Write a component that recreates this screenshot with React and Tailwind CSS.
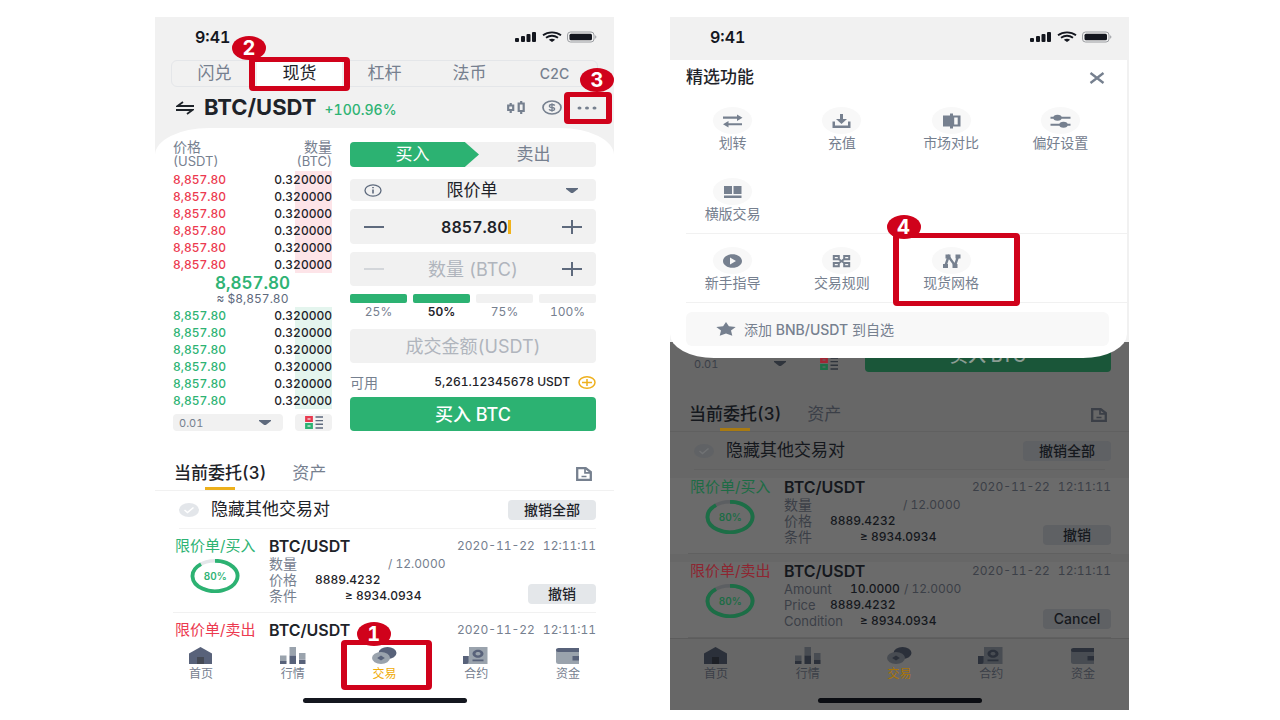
import React from "react";

const light = {
  strong: "text-[#1e2329]",
  muted: "text-[#76808f]",
  green: "text-[#2eb374]",
  red: "text-[#ec3a50]",
  amber: "text-[#f0ac0a]",
  underline: "bg-[#edb01c]",
  line: "border-[#f1f1f1]",
  field: "bg-[#f1f1f1]",
  action: "bg-[#e4e7ea]",
  buy: "bg-[#2cb272] text-white",
  tick: "bg-[#e3e6ea]",
  tickMark: "stroke-white",
  track: "stroke-[#e3e6e9]",
  arc: "stroke-[#2cb272]",
  order: "pt-[9px] bg-white",
  navDark: "fill-[#58627a]",
  navLight: "fill-[#9aa3ad]",
  bar: "bg-[#14171f]",
  listRed: "stroke-[#e8394f]",
  listGreen: "stroke-[#2cb272]",
  icon: "text-[#5e6a7d]",
};

const dim = {
  strong: "text-[#15181d]",
  muted: "text-[#3b3f47]",
  green: "text-[#1d6b45]",
  red: "text-[#8e2631]",
  amber: "text-[#a87408]",
  underline: "bg-[#a87a12]",
  line: "border-[#606060]",
  field: "bg-transparent",
  action: "bg-[#5f6164]",
  buy: "bg-[#1a5639] text-[#8b9c93]",
  tick: "bg-[#606265]",
  tickMark: "stroke-[#707274]",
  track: "stroke-[#5c5f62]",
  arc: "stroke-[#1c6e46]",
  order: "mt-2 pt-px bg-[#6b6b6b]",
  navDark: "fill-[#2b303a]",
  navLight: "fill-[#484c52]",
  bar: "bg-[#0b0d12]",
  listRed: "stroke-[#a02634]",
  listGreen: "stroke-[#1c6e46]",
  icon: "text-[#2f343c]",
};

function Marker({ n, box, badge }) {
  return (
    <span className={`pointer-events-none absolute z-20 ${box}`}>
      <span className="absolute inset-0 rounded-sm border-x-[6px] border-y-[5px] border-[#d0021b]" />
      <span
        className={`absolute flex h-6 w-[34px] items-center justify-center rounded-[50%] bg-[#d0021b] text-[20px] leading-6 font-bold text-white ${badge}`}
      >
        {n}
      </span>
    </span>
  );
}

function StatusBar() {
  return (
    <div className="flex h-[43px] items-center justify-between bg-[#f1f1f1] pr-[17px] pb-1 pl-10 text-[#14171f]">
      <span className="text-[16px] font-semibold">9:41</span>
      <svg width="82" height="12" viewBox="0 0 82 12" fill="currentColor" aria-hidden="true">
        <rect x="0" y="7" width="4" height="4" rx="1" />
        <rect x="6" y="5" width="4" height="6" rx="1" />
        <rect x="11.500" y="3" width="4" height="8" rx="1" />
        <rect x="17" y="1" width="4" height="10" rx="1" />
        <g fill="none" stroke="currentColor" strokeWidth="1.900">
          <path d="M28 4.200C33 .4 41 .4 46 4.200" />
          <path d="M31 6.800c3.600-2.500 8.400-2.500 12 0" />
        </g>
        <path d="M33.800 8.800c2-1.400 4.400-1.400 6.400 0L37 11z" />
        <rect x="52.500" y="1" width="26.500" height="10" rx="3" fill="none" stroke="#9b9ea2" />
        <rect x="54.500" y="2.700" width="22.500" height="6.600" rx="1.500" />
        <path d="M80.200 4.300c1.600.6 1.600 2.800 0 3.400z" fill="#9b9ea2" />
      </svg>
    </div>
  );
}

function Caret() {
  return (
    <svg width="12" height="7" viewBox="0 0 12 7" fill="currentColor" aria-hidden="true">
      <path d="M0 1h12v1L7.500 5.500Q6 6.500 4.500 5.500L0 2z" />
    </svg>
  );
}

function ListIcon({ c }) {
  return (
    <svg width="18" height="13" viewBox="0 0 18 13" fill="none" className={c.icon} aria-hidden="true">
      <rect x="1.300" y="1.200" width="5.400" height="3.600" strokeWidth="2.400" className={c.listRed} />
      <rect x="1.300" y="8.200" width="5.400" height="3.600" strokeWidth="2.400" className={c.listGreen} />
      <path d="M10.500 1h7.500M10.500 4.600h7.500M10.500 8.300h7.500M10.500 12h7.500" stroke="currentColor" strokeWidth="1.400" />
    </svg>
  );
}

function Depth({ c }) {
  return (
    <div className="flex h-[17px] items-center justify-between gap-3">
      <label className={`flex h-full flex-1 items-center rounded-sm pr-3 pl-1.5 ${c.field} ${c.icon}`}>
        <select aria-label="深度" className={`flex-1 appearance-none bg-transparent text-[11px] leading-4 outline-none ${c.muted}`}>
          <option>0.01</option>
        </select>
        <Caret />
      </label>
      <button aria-label="盘口样式" className={`flex h-full w-[37px] items-center justify-center rounded-sm ${c.field}`}>
        <ListIcon c={c} />
      </button>
    </div>
  );
}

function BuyButton({ c }) {
  return <button className={`flex h-[34px] w-full items-center justify-center rounded-sm text-[18px] font-medium ${c.buy}`}>买入 BTC</button>;
}

function OrderTabs({ c }) {
  return (
    <div className={`border-b pt-[26px] ${c.line}`}>
      <div className="flex h-[33px] items-stretch px-[19px]">
        <button className={`relative text-[17px] font-medium ${c.strong}`}>
          当前委托(3)
          <span className={`absolute bottom-0 left-1/2 h-[3px] w-[30px] -translate-x-1/2 ${c.underline}`} />
        </button>
        <button className={`ml-[26px] text-[17px] ${c.muted}`}>资产</button>
        <button aria-label="历史委托" className={`mr-[3px] ml-auto ${c.muted}`}>
          <svg width="16" height="14" viewBox="0 0 16 14" fill="none" stroke="currentColor" aria-hidden="true">
            <path d="M1.200 1h8.300L14.800 5v8H1.200z" strokeWidth="2.300" />
            <path d="M9 1v4.800h6" strokeWidth="1.700" />
            <path d="M5.500 9.500h5" strokeWidth="1.500" />
          </svg>
        </button>
      </div>
    </div>
  );
}

function HideOthers({ c }) {
  return (
    <div className="flex h-[37px] items-center pr-[18px] pl-6">
      <label className={`flex items-center gap-3 text-[17px] ${c.strong}`}>
        <span className="grid place-items-center">
          <input type="checkbox" defaultChecked className={`h-[14px] w-5 appearance-none rounded-[50%] [grid-area:1/1] ${c.tick}`} />
          <svg width="12" height="8" viewBox="0 0 12 8" fill="none" strokeWidth="1.500" className={`pointer-events-none [grid-area:1/1] ${c.tickMark}`} aria-hidden="true">
            <path d="M1.500 4l3 2.500L10.500 1.500" />
          </svg>
        </span>
        隐藏其他交易对
      </label>
      <button className={`ml-auto h-5 w-[88px] rounded-sm text-[14px] leading-5 font-medium ${c.action} ${c.strong}`}>撤销全部</button>
    </div>
  );
}

function Order({ c, side, sell, en, brief }) {
  const tone = sell ? c.red : c.green;
  const label = `font-normal ${c.muted} ${en ? "text-[13px]" : "text-[14px]"}`;
  return (
    <article className={c.order}>
      <div className={`mx-[18px] flex ${brief ? "" : `border-b pb-2 ${c.line}`}`}>
        <div className="flex w-[96px] flex-col items-start pl-0.5">
          <div className="flex flex-col items-center">
            <span className={`text-[15px] leading-4 whitespace-nowrap ${tone}`}>限价单/{side}</span>
            {!brief && (
              <div className="mt-[5px] grid place-items-center">
                <svg width="50" height="34" viewBox="0 0 50 34" fill="none" className="[grid-area:1/1]" aria-hidden="true">
                  <ellipse cx="25" cy="17" rx="22.500" ry="15.200" strokeWidth="3.600" className={c.track} />
                  <path d="M25 1.800A22.500 15.200 0 1 1 11 5.100" strokeWidth="3.800" className={c.arc} />
                </svg>
                <span className={`text-[10px] leading-3 font-semibold [grid-area:1/1] ${c.green}`}>80%</span>
              </div>
            )}
          </div>
        </div>
        <div className="flex-1">
          <div className="flex items-center justify-between leading-4">
            <span className={`text-[16px] leading-4 font-semibold ${c.strong}`}>BTC/USDT</span>
            <span className={`flex gap-2 text-[12px] leading-4 ${c.muted}`}>
              <span>2020-11-22</span>
              <span>12:11:11</span>
            </span>
          </div>
          {!brief && (
            <div className="mt-0.5 flex items-end justify-between">
              <dl className={`text-[12px] leading-4 font-medium ${c.strong}`}>
                <div className="flex">
                  <dt className={`${label} ${en ? "w-[66px]" : "w-[119px]"}`}>{en ? "Amount" : "数量"}</dt>
                  <dd>
                    {en && <span className="mr-1">10.0000</span>}
                    <span className={`font-normal ${c.muted}`}>/ 12.0000</span>
                  </dd>
                </div>
                <div className="flex">
                  <dt className={`w-[46px] ${label}`}>{en ? "Price" : "价格"}</dt>
                  <dd>8889.4232</dd>
                </div>
                <div className="flex">
                  <dt className={`w-[76px] ${label}`}>{en ? "Condition" : "条件"}</dt>
                  <dd>≥ 8934.0934</dd>
                </div>
              </dl>
              <button className={`h-5 w-[68px] rounded-sm text-[14px] leading-5 font-medium ${c.action} ${c.strong}`}>{en ? "Cancel" : "撤销"}</button>
            </div>
          )}
        </div>
      </div>
    </article>
  );
}

const navIcons = {
  home: (c) => (
    <>
      <path d="M1 6.500L12.500 0 24 6.500V17H1z" className={c.navDark} />
      <path d="M9 10h7v7H9z" className={c === dim ? "fill-[#1d2026]" : "fill-[#454a55]"} />
    </>
  ),
  market: (c) => (
    <>
      <path d="M0 8.500h6.500v6H0zM9.500 0H16v8.500H9.500zM19 6h6.500v6H19z" className={c.navLight} />
      <path d="M0 14h6.500v3H0zM9.500 8.500H16V17H9.500zM19 12.500h6.500V17H19z" className={c.navDark} />
    </>
  ),
  trade: (c) => (
    <>
      <ellipse cx="16.500" cy="6" rx="9" ry="6" className={c.navDark} />
      <ellipse cx="10" cy="11" rx="9" ry="6" className={c.navLight} />
      <path d="M10 8.400l3.800 2.600-3.800 2.600L6.200 11z" className={c.navDark} />
    </>
  ),
  futures: (c) => (
    <>
      <path d="M6 0h18.500v17H3V9h3z" className={c.navLight} />
      <path d="M0 9h5.500v5.500Q5.500 17 3 17H0z" className={c.navDark} />
      <path fillRule="evenodd" d="M15 2.800c3 0 5.500 1.800 5.500 4s-2.500 4-5.500 4-5.500-1.800-5.500-4 2.500-4 5.500-4zm0 2.300c-1.500 0-2.500.7-2.500 1.700s1 1.700 2.500 1.700 2.500-.7 2.500-1.700-1-1.700-2.500-1.700zM9.500 12.600h11v1.600h-11z" className={c.navDark} />
    </>
  ),
  wallet: (c) => (
    <>
      <path d="M1 2h23v15H3.500Q1 17 1 15z" className={c.navLight} />
      <path d="M3.500 1H24v4H3Q1 5 1 3T3.500 1zM17.500 9H24v4.500h-6.500z" className={c.navDark} />
    </>
  ),
};

const navItems = [
  ["home", "首页"],
  ["market", "行情"],
  ["trade", "交易"],
  ["futures", "合约"],
  ["wallet", "资金"],
];

function BottomNav({ c, marker }) {
  return (
    <nav className={c === dim ? "border-t border-[#5c5c5c]" : "border-t border-transparent"}>
      <div className="grid grid-cols-5">
        {navItems.map(([id, label]) => (
          <a key={id} href={`#${id}`} className={`relative flex h-[51px] flex-col items-center pt-2 text-[12px] leading-[18px] ${id === "trade" ? c.amber : c.muted}`}>
            <svg width="26" height="17" viewBox="0 0 26 17" className="mb-px" aria-hidden="true">
              {navIcons[id](c)}
            </svg>
            {label}
            {marker && id === "trade" && <Marker n="1" box="left-0.5 -right-0.5 top-px bottom-0" badge="left-4 -top-[18px]" />}
          </a>
        ))}
      </div>
      <div className="flex justify-center pt-2 pb-[7px]">
        <div className={`h-[5px] w-[164px] rounded-full ${c.bar}`} />
      </div>
    </nav>
  );
}

function Book({ tone, shade }) {
  return (
    <table className="w-full text-[12px] leading-[17px] font-medium">
      <tbody>
        {[0, 1, 2, 3, 4, 5].map((i) => (
          <tr key={i}>
            <td className={`p-0 ${tone}`}>8,857.80</td>
            <td className={`p-0 text-right text-[#1e2329] ${shade}`}>0.320000</td>
          </tr>
        ))}
      </tbody>
    </table>
  );
}

function Minus({ faded }) {
  return (
    <svg width="20" height="16" viewBox="0 0 20 16" stroke={faded ? "#d3d6da" : "#5e6a7d"} strokeWidth="2" aria-hidden="true">
      <path d="M0 8h20" />
    </svg>
  );
}

function Plus() {
  return (
    <svg width="20" height="16" viewBox="0 0 20 16" stroke="#5e6a7d" strokeWidth="2" aria-hidden="true">
      <path d="M0 8h20M10 1v14" />
    </svg>
  );
}

const field = "flex items-center rounded-sm bg-[#f1f1f1] px-[14px]";

function TradeForm() {
  return (
    <div className="pt-0.5">
      <div className="flex h-[25px] rounded-sm bg-[#f1f1f1] text-[17px]">
        <button className="w-[129px] rounded-l-sm bg-[#2cb272] pr-1 text-center text-white [clip-path:polygon(0_0,89%_0,100%_50%,89%_100%,0_100%)]">买入</button>
        <button className="flex-1 pr-2 text-[#76808f]">卖出</button>
      </div>
      <label className={`mt-3 h-[22px] text-[#5e6a7d] ${field}`}>
        <svg width="18" height="13" viewBox="0 0 18 13" fill="none" stroke="currentColor" strokeWidth="1.300" aria-hidden="true">
          <ellipse cx="9" cy="6.500" rx="8" ry="5.600" />
          <path d="M9 5.500v4M9 3v1.300" strokeWidth="1.600" />
        </svg>
        <select aria-label="订单类型" className="flex-1 appearance-none bg-transparent text-[17px] leading-5 text-[#1e2329] outline-none [text-align-last:center]">
          <option>限价单</option>
        </select>
        <span className="px-1">
          <Caret />
        </span>
      </label>
      <div className={`mt-2 h-[35px] justify-between ${field}`}>
        <button aria-label="降低价格"><Minus /></button>
        <span className="flex items-center pr-1">
          <input aria-label="价格" defaultValue="8857.80" className="w-[76px] bg-transparent text-right text-[16px] font-semibold text-[#1e2329] outline-none" />
          <span className="h-[14px] w-[3px] bg-[#f0b21c]" />
        </span>
        <button aria-label="提高价格"><Plus /></button>
      </div>
      <div className={`mt-2 h-[34px] justify-between ${field}`}>
        <button aria-label="减少数量"><Minus faded /></button>
        <input aria-label="数量" placeholder="数量 (BTC)" className="w-36 bg-transparent text-center text-[18px] outline-none placeholder:text-[#b0b5bd]" />
        <button aria-label="增加数量"><Plus /></button>
      </div>
      <div className="mt-2 grid grid-cols-4 gap-1.5 text-[12px] leading-[18px]">
        {["25%", "50%", "75%", "100%"].map((p, i) => (
          <button key={p} className={i === 1 ? "font-semibold text-[#1e2329]" : "text-[#76808f]"}>
            <span className={`block h-[9px] rounded-xs ${i < 2 ? "bg-[#2cb272]" : "bg-[#f1f1f1]"}`} />
            {p}
          </button>
        ))}
      </div>
      <div className={`mt-2 h-[34px] ${field}`}>
        <input aria-label="成交金额" placeholder="成交金额(USDT)" className="w-full bg-transparent text-center text-[18px] outline-none placeholder:text-[#b0b5bd]" />
      </div>
      <div className="flex h-[34px] items-center pt-1 text-[12px] font-medium text-[#1e2329]">
        <span className="text-[14px] font-normal text-[#76808f]">可用</span>
        <span className="ml-auto">5,261.12345678 USDT</span>
        <button aria-label="充值" className="ml-2">
          <svg width="18" height="13" viewBox="0 0 18 13" fill="none" stroke="#eeb01d" strokeWidth="1.500" aria-hidden="true">
            <ellipse cx="9" cy="6.500" rx="8" ry="5.700" />
            <path d="M4 6.500h10M9 3v7" />
          </svg>
        </button>
      </div>
      <BuyButton c={light} />
    </div>
  );
}

function TradeScreen() {
  return (
    <section className="bg-[#f1f1f1]">
      <StatusBar />
      <div className="mx-4 grid h-[27px] grid-cols-5 rounded-md border border-[#e4e6e9] text-[17px] text-[#76808f]">
        <button>闪兑</button>
        <button className="relative bg-white text-[#1e2329]">
          现货
          <Marker n="2" box="-top-1 -bottom-1 -left-2 -right-2" badge="-left-[17px] -top-[21px]" />
        </button>
        <button>杠杆</button>
        <button>法币</button>
        <button className="text-[14px] font-medium">C2C</button>
      </div>
      <div className="flex h-[41px] items-center pr-2.5 pl-[21px] text-[#76808f]">
        <svg width="18" height="14" viewBox="0 0 18 14" fill="none" stroke="#1e2329" strokeWidth="1.800" aria-hidden="true">
          <path d="M18 5H1.500L7 1M0 9h16.500L11 13" />
        </svg>
        <h1 className="ml-2.5 text-[22px] font-bold text-[#1e2329]">BTC/USDT</h1>
        <span className="mt-1 ml-2 text-[14px] font-medium text-[#2eb374]">+100.96%</span>
        <button aria-label="K线" className="ml-auto">
          <svg width="18" height="13" viewBox="0 0 18 13" fill="none" stroke="currentColor" strokeWidth="2.200" aria-hidden="true">
            <path d="M1.200 4.500h5v4.500h-5zM3.700 2V4.500M3.700 9v3M11.700 2.500h5v7.500h-5zM14.200 0v2.500M14.200 10v3" />
          </svg>
        </button>
        <button aria-label="资产" className="ml-[17px]">
          <svg width="20" height="15" viewBox="0 0 20 15" fill="none" stroke="currentColor" strokeWidth="1.700" aria-hidden="true">
            <ellipse cx="10" cy="7.500" rx="9" ry="6.500" />
            <path d="M12.800 5.500Q12 4.500 10 4.500q-2.600 0-2.600 1.400T10 7.500t2.600 1.600T10 10.500q-2.200 0-3-1.100M10 3.200v8.600" strokeWidth="1.300" />
          </svg>
        </button>
        <button aria-label="更多" className="relative ml-2 flex h-8 w-[34px] items-center justify-center">
          <svg width="20" height="4" viewBox="0 0 20 4" fill="currentColor" aria-hidden="true">
            <ellipse cx="2.500" cy="2" rx="2" ry="1.500" />
            <ellipse cx="10" cy="2" rx="2" ry="1.500" />
            <ellipse cx="17.500" cy="2" rx="2" ry="1.500" />
          </svg>
          <Marker n="3" box="inset-y-0 -left-1.5 -right-2" badge="left-4 -top-6" />
        </button>
      </div>
      <div className="rounded-t-[54px_27px] bg-white">
        <div className="grid grid-cols-[159fr_246fr] gap-[18px] px-[18px] pt-3">
          <div>
            <div className="flex justify-between text-[13px] leading-[14px] text-[#76808f]">
              <span>
                <span className="block text-[14px]">价格</span>(USDT)
              </span>
              <span className="text-right">
                <span className="block text-[14px]">数量</span>(BTC)
              </span>
            </div>
            <div className="pt-[3px]">
              <Book tone="text-[#ec3a50]" shade="bg-[linear-gradient(to_left,#fde4e8_37px,transparent_37px)]" />
            </div>
            <div className="pb-px pt-px text-center">
              <div className="text-[17px] leading-[18px] font-semibold text-[#2eb374]">8,857.80</div>
              <div className="text-[12px] leading-[14px] text-[#5e6a7d]">≈ $8,857.80</div>
            </div>
            <Book tone="text-[#2eb374]" shade="bg-[linear-gradient(to_left,#e4f5ee_37px,transparent_37px)]" />
            <div className="pt-[5px]">
              <Depth c={light} />
            </div>
          </div>
          <TradeForm />
        </div>
        <OrderTabs c={light} />
        <HideOthers c={light} />
        <div className="mr-[18px] ml-6 border-t border-[#f3f3f3]" />
        <Order c={light} side="买入" />
        <Order c={light} side="卖出" sell brief />
        <BottomNav c={light} marker />
      </div>
    </section>
  );
}

const tileIcons = {
  transfer: (
    <path d="M1 3.600h14V1.500L20.500 4.800 15 8V5.800H1zM20 10.200H6.500V8L1 11.300l5.500 3.200v-2.200H20z" />
  ),
  deposit: (
    <path d="M9 1h3v5h4l-5.500 5L5 6h4zM1.500 8.500h2.500v4h13v-4h2.500V15h-18z" />
  ),
  compare: (
    <path fillRule="evenodd" d="M2 2.500h7V.500h3v2h7.500v11H12v2H9v-2H2zM13.200 4.500v7h3.500v-7z" />
  ),
  settings: (
    <>
      <path d="M.5 3.700h20v2H.5zM.5 10.700h20v2H.5z" />
      <ellipse cx="7.500" cy="4.700" rx="4.200" ry="3" />
      <ellipse cx="13.500" cy="11.700" rx="4.200" ry="3" />
    </>
  ),
  landscape: <path d="M2 2h8v8H2zM11.500 2h8v8h-8zM2 11.500h17.500v2.500H2z" />,
  guide: (
    <path fillRule="evenodd" d="M10.500 1.200C15.700 1.200 20 4.200 20 8s-4.300 6.800-9.500 6.800S1 11.800 1 8s4.300-6.800 9.500-6.800zM8 4.500v7l6-3.500z" />
  ),
  rules: (
    <g fill="none" stroke="currentColor" strokeWidth="2">
      <path d="M2.800 3h5v3.200h-5zM13.200 3h5v3.200h-5zM2.800 10h5v3.200h-5zM13.200 10h5v3.200h-5z" />
      <path d="M7.800 10.200l5.400-4.200M7.800 6.200l2 1.400M11.200 8.600l2 1.400" strokeWidth="1.800" />
    </g>
  ),
  grid: (
    <>
      <path d="M4.500 12.500L7.500 3.500l6.500 9 3-9" fill="none" stroke="currentColor" strokeWidth="2.400" />
      <path d="M4.500 1.500h5v4h-5zM14.500 1.500h5v4h-5zM2 11h5v4H2zM11.500 11h5v4h-5z" />
    </>
  ),
};

function Tile({ id, label, marked }) {
  return (
    <button className="relative flex flex-col items-center text-[14px] leading-[17px] text-[#76808f]">
      <span className="flex h-[27px] w-[39px] items-center justify-center rounded-[50%] bg-[#f8f8f8]">
        <svg width="21" height="16" viewBox="0 0 21 16" fill="currentColor" aria-hidden="true">
          {tileIcons[id]}
        </svg>
      </span>
      {label}
      {marked && <Marker n="4" box="-top-[14px] -bottom-[15px] -left-1 -right-[14px]" badge="-left-1.5 -top-[18px]" />}
    </button>
  );
}

function MenuScreen() {
  return (
    <section className="bg-[#f1f1f1]">
      <StatusBar />
      <div className="relative z-10 mr-0.5 rounded-b-[44px_24px] bg-white pb-3">
        <div className="flex h-[35px] items-center justify-between pr-[22px] pl-4">
          <h2 className="text-[17px] font-medium text-[#1e2329]">精选功能</h2>
          <button aria-label="关闭">
            <svg width="16" height="12" viewBox="0 0 16 12" fill="none" stroke="#76808f" strokeWidth="2.400" aria-hidden="true">
              <path d="M1.500 1l13 10M14.500 1l-13 10" />
            </svg>
          </button>
        </div>
        <div className="grid grid-cols-4 gap-y-[27px] pt-3 pr-3 pb-[11px] pl-2">
          <Tile id="transfer" label="划转" />
          <Tile id="deposit" label="充值" />
          <Tile id="compare" label="市场对比" />
          <Tile id="settings" label="偏好设置" />
          <Tile id="landscape" label="横版交易" />
        </div>
        <hr className="ml-4 border-[#f1f1f1]" />
        <div className="grid grid-cols-4 pt-[13px] pr-3 pb-[11px] pl-2">
          <Tile id="guide" label="新手指导" />
          <Tile id="rules" label="交易规则" />
          <Tile id="grid" label="现货网格" marked />
        </div>
        <hr className="ml-4 border-[#f1f1f1]" />
        <div className="pt-[9px] pr-[18px] pl-4">
          <button className="flex h-[34px] w-full items-center gap-2 rounded-md bg-[#f8f8f8] pl-[30px] text-[14px] text-[#76808f]">
            <svg width="20" height="14" viewBox="0 0 20 14" fill="currentColor" aria-hidden="true">
              <path d="M10 0l2.900 4.300 6.800.7-4.700 3.500 1.300 5.200L10 11.500l-6.300 2.200L5 8.500.300 5l6.800-.7z" />
            </svg>
            <span>
              添加 <span className="font-medium">BNB/USDT</span> 到自选
            </span>
          </button>
        </div>
      </div>
      <div className="-mt-4 flow-root bg-[#676767]">
        <div className="-mt-1 grid grid-cols-[159fr_246fr] items-end gap-[18px] px-[18px]">
          <Depth c={dim} />
          <BuyButton c={dim} />
        </div>
        <OrderTabs c={dim} />
        <HideOthers c={dim} />
        <div className="mx-6 border-t border-[#616161]" />
        <Order c={dim} side="买入" />
        <Order c={dim} side="卖出" sell en />
        <BottomNav c={dim} />
      </div>
    </section>
  );
}

export default function App() {
  return (
    <main className="min-h-screen bg-white pt-[17px] pb-2 pl-1 font-['Inter','Noto_Sans_CJK_SC',sans-serif] tabular-nums">
      <div className="mx-auto grid max-w-[974px] grid-cols-2 items-start gap-14">
        <TradeScreen />
        <MenuScreen />
      </div>
    </main>
  );
}
